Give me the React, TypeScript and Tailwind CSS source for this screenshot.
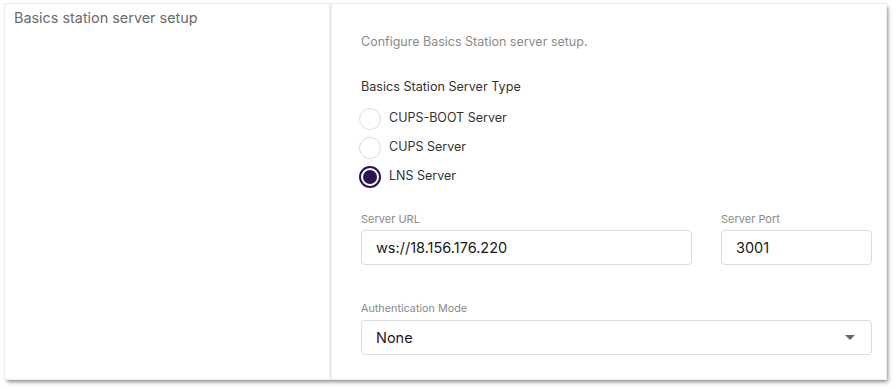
export default function App() {
  return (
    <div className="h-[389px] w-[896px] bg-white pl-[5px] pt-[4px] font-['Inter',sans-serif]">
      <div className="flex h-[375px] w-[881px] bg-white shadow-[2px_3px_4px_rgba(0,0,0,0.45)] ring-1 ring-[#ececec]">
        <div className="w-[327px] border-r-[3px] border-[#ededed] pl-[9px] pt-[3px]">
          <h2 className="text-[14.4px] text-[#6b6b6b]">Basics station server setup</h2>
        </div>
        <div className="flex-1 pl-[29px] pr-[12px] pt-[29px]">
          <p className="text-[12.5px] text-[#8a8a8a]">Configure Basics Station server setup.</p>

          <p className="mt-[26px] text-[12.6px] text-[#333]">Basics Station Server Type</p>
          <div className="-ml-[2px] mt-[11px] flex flex-col gap-[7px]">
            <Radio label="CUPS-BOOT Server" />
            <Radio label="CUPS Server" />
            <Radio label="LNS Server" checked />
          </div>

          <div className="mt-[23px] flex gap-[29px]">
            <div className="w-[331px]">
              <label className="block text-[11px] text-[#8a8a8a]">Server URL</label>
              <div className="mt-[3px] flex h-[35px] items-center rounded-[4px] border border-[#dcdcdc] px-[14px] text-[14.5px] text-[#1a1a1a]">
                ws://18.156.176.220
              </div>
            </div>
            <div className="w-[151px]">
              <label className="block text-[11px] text-[#8a8a8a]">Server Port</label>
              <div className="mt-[3px] flex h-[35px] items-center rounded-[4px] border border-[#dcdcdc] px-[14px] text-[14.5px] text-[#1a1a1a]">
                3001
              </div>
            </div>
          </div>

          <div className="mt-[36px] w-[511px]">
            <label className="block text-[10.8px] text-[#8a8a8a]">Authentication Mode</label>
            <div className="mt-[3px] flex h-[35px] items-center justify-between rounded-[4px] border border-[#dcdcdc] pl-[14px] pr-[16px] text-[14.5px] text-[#1a1a1a]">
              <span>None</span>
              <span className="h-0 w-0 border-x-[5px] border-t-[5px] border-x-transparent border-t-[#666]" />
            </div>
          </div>
        </div>
      </div>
    </div>
  );
}

function Radio({ label, checked }: { label: string; checked?: boolean }) {
  return (
    <div className="flex items-center gap-[8px]">
      <span
        className={
          checked
            ? 'flex h-[22px] w-[22px] items-center justify-center rounded-full border-2 border-[#2b1450] bg-white'
            : 'h-[22px] w-[22px] rounded-full border border-[#dedede] bg-white'
        }
      >
        {checked && <span className="h-[14px] w-[14px] rounded-full bg-[#2b1450]" />}
      </span>
      <span className="text-[12.5px] text-[#333]">{label}</span>
    </div>
  );
}
